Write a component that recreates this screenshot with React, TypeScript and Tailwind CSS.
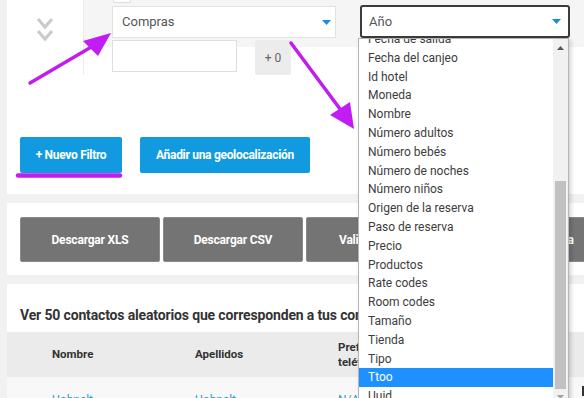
import React from "react";

const OPTIONS = [
  "Fecha de salida",
  "Fecha del canjeo",
  "Id hotel",
  "Moneda",
  "Nombre",
  "Número adultos",
  "Número bebés",
  "Número de noches",
  "Número niños",
  "Origen de la reserva",
  "Paso de reserva",
  "Precio",
  "Productos",
  "Rate codes",
  "Room codes",
  "Tamaño",
  "Tienda",
  "Tipo",
  "Ttoo",
  "Uuid",
];

export default function App() {
  return (
    <div className="relative w-[584px] h-[398px] overflow-hidden bg-[#f1f1f1] font-['Roboto',sans-serif] text-[#333]">
      <div className="pl-[7px] flex flex-col gap-[9px]">
        <FilterCard />
        <DownloadCard />
        <ContactsCard />
      </div>

      {/* open select list */}
      <FieldDropdown />

      {/* annotation arrows */}
      <svg className="absolute inset-0 pointer-events-none" width="584" height="398">
        <line x1="30" y1="83" x2="93" y2="46" stroke="#c11cf2" strokeWidth="3.5" strokeLinecap="round" />
        <polygon points="111,33 83,41 98,56" fill="#c11cf2" />
        <line x1="291" y1="43" x2="343" y2="113" stroke="#c11cf2" strokeWidth="3.5" strokeLinecap="round" />
        <polygon points="354,129 330,115 350,102" fill="#c11cf2" />
        <line x1="18" y1="175.5" x2="120" y2="175.5" stroke="#c11cf2" strokeWidth="4.5" strokeLinecap="round" />
        <rect x="582" y="386" width="2" height="10" fill="#333" />
      </svg>
    </div>
  );
}

function SelectArrow() {
  return (
    <svg width="9" height="5" viewBox="0 0 9 5">
      <polygon points="0,0 9,0 4.5,5" fill="#1a8fd6" />
    </svg>
  );
}

function FilterCard() {
  return (
    <div className="bg-white h-[194px] flex flex-col">
      <div className="flex h-[75px]">
        <div className="w-[76px] shrink-0 flex justify-center pt-[17px]">
          <svg width="18" height="26" viewBox="0 0 18 26">
            <polyline points="2,2 9,10 16,2" fill="none" stroke="#cbcbcb" strokeWidth="3.2" />
            <polyline points="2,14 9,22 16,14" fill="none" stroke="#cbcbcb" strokeWidth="3.2" />
          </svg>
        </div>
        <div className="flex-1 border-l border-[#ececec] bg-[linear-gradient(to_bottom,#f5f5f5_47px,#ffffff_47px)] pl-[28px]">
          <div className="flex items-start">
            <div className="w-[224px] flex flex-col">
              <div className="ml-[1px] w-[18px] h-[3px] border border-t-0 border-[#dcdcdc] rounded-b-[2px] bg-white" />
              <div className="mt-[3px] h-[32px] border border-[#e2e2e2] bg-white flex items-center justify-between pl-[9px] pr-[4px] text-[13px] text-[#555]">
                <span>Compras</span>
                <SelectArrow />
              </div>
            </div>
            <div className="ml-[24px] mt-[5px] w-[210px] h-[33px] border-2 border-[#3b3b3b] rounded-[3px] bg-white flex items-center justify-between pl-[7px] pr-[7px] text-[13px] text-[#555]">
              <span>Año</span>
              <SelectArrow />
            </div>
          </div>
          <div className="flex items-start mt-[2px]">
            <div className="w-[125px] h-[32px] border border-[#dedede] bg-white" />
            <div className="ml-[18px] w-[36px] h-[35px] bg-[#ececec] rounded-[2px] flex items-center justify-center text-[12px] text-[#666]">
              + 0
            </div>
          </div>
        </div>
      </div>
      <div className="flex gap-[18px] pl-[13px] mt-[62px]">
        <button className="w-[102px] h-[36px] bg-[#119ae0] rounded-[2px] text-white text-[12px] font-bold tracking-[-0.3px]">
          + Nuevo Filtro
        </button>
        <button className="w-[170px] h-[36px] bg-[#119ae0] rounded-[2px] text-white text-[12px] font-bold tracking-[-0.3px]">
          Añadir una geolocalización
        </button>
      </div>
    </div>
  );
}

function DownloadCard() {
  const labels = ["Descargar XLS", "Descargar CSV", "Validar emails", "Añadir a herramienta"];
  return (
    <div className="bg-white h-[72px] pt-[14px] pl-[13px] flex gap-[3px]">
      {labels.map((l) => (
        <div
          key={l}
          className="w-[140px] h-[45px] shrink-0 bg-[#747474] border border-[#8a8a8a] rounded-[2px] flex items-center justify-center text-white text-[12px] font-bold tracking-[-0.2px]"
        >
          {l}
        </div>
      ))}
    </div>
  );
}

function ContactsCard() {
  return (
    <div className="bg-white h-[140px] pt-[21px]">
      <h2 className="pl-[13px] text-[14px] leading-[20px] font-bold tracking-[-0.15px] text-[#333] whitespace-nowrap">
        Ver 50 contactos aleatorios que corresponden a tus condiciones
      </h2>
      <div className="mt-[7px] h-[45px] bg-[#ebebeb] grid grid-cols-[143px_143px_143px_143px] pl-[45px] items-center text-[11.5px] font-bold text-[#333]">
        <span>Nombre</span>
        <span>Apellidos</span>
        <span className="leading-[15px]">
          Prefijo
          <br />
          teléfono
        </span>
        <span>Teléfono</span>
      </div>
      <div className="h-[40px] bg-[#f8f8f8] grid grid-cols-[143px_143px_143px_143px] pl-[45px] pt-[14px] text-[12px] text-[#2a9fd8]">
        <span>Uobnslt</span>
        <span>Uobnslt</span>
        <span>N/A</span>
        <span>N/A</span>
      </div>
    </div>
  );
}

function FieldDropdown() {
  return (
    <div className="absolute left-[358px] top-[38px] w-[211px] h-[372px] bg-white border border-[#b5b5b5] shadow-[2px_2px_4px_rgba(0,0,0,0.18)] flex">
      <div className="flex-1 overflow-hidden">
        <ul className="-mt-[9px]">
          {OPTIONS.map((o) => (
            <li
              key={o}
              className={
                o === "Ttoo"
                  ? "h-[18.8px] leading-[18.8px] pl-[9px] text-[12px] bg-[#1e90ff] text-white"
                  : "h-[18.8px] leading-[18.8px] pl-[9px] text-[12px] text-[#3d3d3d]"
              }
            >
              {o}
            </li>
          ))}
        </ul>
      </div>
      <div className="w-[15px] bg-[#f1f1f1] flex flex-col items-center">
        <div className="h-[17px] flex items-center justify-center">
          <svg width="7" height="4" viewBox="0 0 7 4">
            <polygon points="0,4 7,4 3.5,0" fill="#555" />
          </svg>
        </div>
        <div className="h-[125px]" />
        <div className="w-[11px] h-[208px] bg-[#c1c1c1]" />
        <div className="h-[15px] flex items-center justify-center">
          <svg width="7" height="4" viewBox="0 0 7 4">
            <polygon points="0,0 7,0 3.5,4" fill="#a3a3a3" />
          </svg>
        </div>
      </div>
    </div>
  );
}
